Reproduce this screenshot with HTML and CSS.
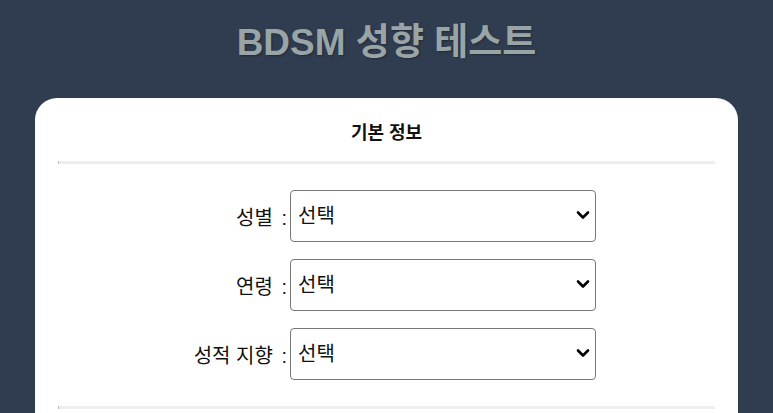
FILE: index.html
```html
<!doctype html>
<html lang="ko">
<head>
    <meta charset="utf-8">
    <meta name="viewport" content="width=device-width, initial-scale=1">
    <link rel="stylesheet" href="styles.css">
    <title>BDSM 성향 테스트</title>
</head>
<body>
    <h1 class="title">BDSM 성향 테스트</h1>

    <div class="card">
        <h2 class="section-title">기본 정보</h2>
        <hr class="line">

        <div class="form">
            <label class="label" for="gender">성별 <span class="colon">:</span></label>
            <span class="select-wrap">
                <select id="gender" class="select">
                    <option>선택</option>
                    <option>남성</option>
                    <option>여성</option>
                </select>
                <svg class="chevron" width="14" height="10" viewBox="0 0 14 10"><path d="M2 2.5 L7 7.5 L12 2.5" fill="none" stroke="#000" stroke-width="2.6" stroke-linecap="round" stroke-linejoin="round"/></svg>
            </span>

            <label class="label" for="age">연령 <span class="colon">:</span></label>
            <span class="select-wrap">
                <select id="age" class="select">
                    <option>선택</option>
                    <option>20대</option>
                    <option>30대</option>
                </select>
                <svg class="chevron" width="14" height="10" viewBox="0 0 14 10"><path d="M2 2.5 L7 7.5 L12 2.5" fill="none" stroke="#000" stroke-width="2.6" stroke-linecap="round" stroke-linejoin="round"/></svg>
            </span>

            <label class="label" for="orient">성적 지향 <span class="colon">:</span></label>
            <span class="select-wrap">
                <select id="orient" class="select">
                    <option>선택</option>
                    <option>이성애</option>
                    <option>동성애</option>
                </select>
                <svg class="chevron" width="14" height="10" viewBox="0 0 14 10"><path d="M2 2.5 L7 7.5 L12 2.5" fill="none" stroke="#000" stroke-width="2.6" stroke-linecap="round" stroke-linejoin="round"/></svg>
            </span>
        </div>

        <hr class="line">
    </div>
</body>
</html>
```

FILE: styles.css
```css
html, body {
    height: 100%;
}
body {
    margin: 0;
    padding: 0;
    background: #303d51;
    font-family: "Liberation Sans", "Noto Sans CJK KR", sans-serif;
    overflow: hidden;
}
.title {
    margin: 0;
    padding-top: 21px;
    height: 98px;
    box-sizing: border-box;
    text-align: center;
    font-size: 37px;
    font-weight: bold;
    line-height: 44px;
    color: #98a4a6;
    text-shadow: 1px 1px 2px rgba(0, 0, 0, 0.35);
}
.card {
    margin: 0 35px;
    background: #fff;
    border-radius: 22px;
    padding: 18px 23px 40px;
    min-height: 400px;
}
.section-title {
    margin: 0;
    text-align: center;
    font-size: 18px;
    font-weight: bold;
    line-height: 34px;
    color: #111;
}
.line {
    margin: 11px 0 0;
    height: 3px;
    border: 0;
    background: #eeeeee;
    box-shadow: inset 1px 0 0 #bbb;
}
.form {
    display: grid;
    grid-template-columns: 229px 306px;
    column-gap: 3px;
    row-gap: 17px;
    align-items: center;
    padding: 26px 0 15px 0;
}
.label {
    text-align: right;
    font-size: 20px;
    color: #111;
}
.colon {
    margin-left: 3px;
}
.select-wrap {
    position: relative;
    display: block;
}
.select {
    -webkit-appearance: none;
    appearance: none;
    display: block;
    width: 100%;
    height: 52px;
    margin: 0;
    padding: 0 30px 0 7px;
    border: 1px solid #777;
    border-radius: 4px;
    background: #fff;
    font-family: "Liberation Sans", "Noto Sans CJK KR", sans-serif;
    font-size: 20px;
    color: #111;
}
.chevron {
    position: absolute;
    right: 6px;
    top: 20px;
    pointer-events: none;
}
```
